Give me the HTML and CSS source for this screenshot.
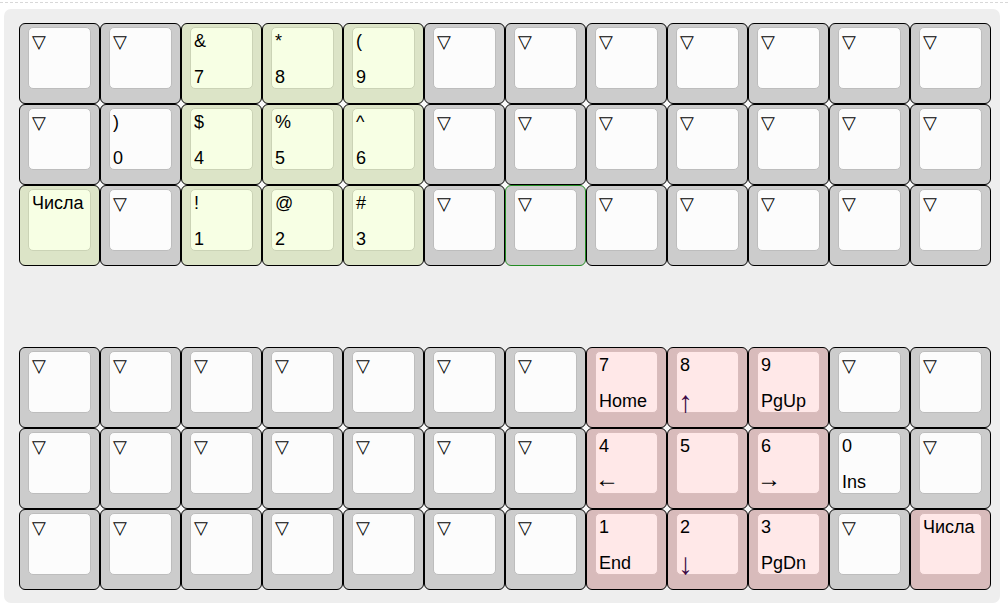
FILE: index.html
```html
<!DOCTYPE html>
<html lang="ru">
<head>
<meta charset="utf-8">
<title>Keyboard layout</title>
<link rel="stylesheet" href="styles.css">
</head>
<body>
<div class="rule"></div>
<div class="board">
  <div class="block">
    <div class="key"><div class="top"><span class="tr">▽</span></div></div>
    <div class="key"><div class="top"><span class="tr">▽</span></div></div>
    <div class="key green"><div class="top"><span>&amp;</span><span class="low">7</span></div></div>
    <div class="key green"><div class="top"><span>*</span><span class="low">8</span></div></div>
    <div class="key green"><div class="top"><span>(</span><span class="low">9</span></div></div>
    <div class="key"><div class="top"><span class="tr">▽</span></div></div>
    <div class="key"><div class="top"><span class="tr">▽</span></div></div>
    <div class="key"><div class="top"><span class="tr">▽</span></div></div>
    <div class="key"><div class="top"><span class="tr">▽</span></div></div>
    <div class="key"><div class="top"><span class="tr">▽</span></div></div>
    <div class="key"><div class="top"><span class="tr">▽</span></div></div>
    <div class="key"><div class="top"><span class="tr">▽</span></div></div>

    <div class="key"><div class="top"><span class="tr">▽</span></div></div>
    <div class="key"><div class="top"><span>)</span><span class="low">0</span></div></div>
    <div class="key green"><div class="top"><span>$</span><span class="low">4</span></div></div>
    <div class="key green"><div class="top"><span>%</span><span class="low">5</span></div></div>
    <div class="key green"><div class="top"><span>^</span><span class="low">6</span></div></div>
    <div class="key"><div class="top"><span class="tr">▽</span></div></div>
    <div class="key"><div class="top"><span class="tr">▽</span></div></div>
    <div class="key"><div class="top"><span class="tr">▽</span></div></div>
    <div class="key"><div class="top"><span class="tr">▽</span></div></div>
    <div class="key"><div class="top"><span class="tr">▽</span></div></div>
    <div class="key"><div class="top"><span class="tr">▽</span></div></div>
    <div class="key"><div class="top"><span class="tr">▽</span></div></div>

    <div class="key green"><div class="top"><span>Числа</span></div></div>
    <div class="key"><div class="top"><span class="tr">▽</span></div></div>
    <div class="key green"><div class="top"><span>!</span><span class="low">1</span></div></div>
    <div class="key green"><div class="top"><span>@</span><span class="low">2</span></div></div>
    <div class="key green"><div class="top"><span>#</span><span class="low">3</span></div></div>
    <div class="key"><div class="top"><span class="tr">▽</span></div></div>
    <div class="key selected"><div class="top"><span class="tr">▽</span></div></div>
    <div class="key"><div class="top"><span class="tr">▽</span></div></div>
    <div class="key"><div class="top"><span class="tr">▽</span></div></div>
    <div class="key"><div class="top"><span class="tr">▽</span></div></div>
    <div class="key"><div class="top"><span class="tr">▽</span></div></div>
    <div class="key"><div class="top"><span class="tr">▽</span></div></div>
  </div>

  <div class="block">
    <div class="key"><div class="top"><span class="tr">▽</span></div></div>
    <div class="key"><div class="top"><span class="tr">▽</span></div></div>
    <div class="key"><div class="top"><span class="tr">▽</span></div></div>
    <div class="key"><div class="top"><span class="tr">▽</span></div></div>
    <div class="key"><div class="top"><span class="tr">▽</span></div></div>
    <div class="key"><div class="top"><span class="tr">▽</span></div></div>
    <div class="key"><div class="top"><span class="tr">▽</span></div></div>
    <div class="key pink"><div class="top"><span>7</span><span class="low">Home</span></div></div>
    <div class="key pink"><div class="top"><span>8</span><span class="low arrow vert">↑</span></div></div>
    <div class="key pink"><div class="top"><span>9</span><span class="low">PgUp</span></div></div>
    <div class="key"><div class="top"><span class="tr">▽</span></div></div>
    <div class="key"><div class="top"><span class="tr">▽</span></div></div>

    <div class="key"><div class="top"><span class="tr">▽</span></div></div>
    <div class="key"><div class="top"><span class="tr">▽</span></div></div>
    <div class="key"><div class="top"><span class="tr">▽</span></div></div>
    <div class="key"><div class="top"><span class="tr">▽</span></div></div>
    <div class="key"><div class="top"><span class="tr">▽</span></div></div>
    <div class="key"><div class="top"><span class="tr">▽</span></div></div>
    <div class="key"><div class="top"><span class="tr">▽</span></div></div>
    <div class="key pink"><div class="top"><span>4</span><span class="low arrow horiz">←</span></div></div>
    <div class="key pink"><div class="top"><span>5</span></div></div>
    <div class="key pink"><div class="top"><span>6</span><span class="low arrow horiz">→</span></div></div>
    <div class="key"><div class="top"><span>0</span><span class="low">Ins</span></div></div>
    <div class="key"><div class="top"><span class="tr">▽</span></div></div>

    <div class="key"><div class="top"><span class="tr">▽</span></div></div>
    <div class="key"><div class="top"><span class="tr">▽</span></div></div>
    <div class="key"><div class="top"><span class="tr">▽</span></div></div>
    <div class="key"><div class="top"><span class="tr">▽</span></div></div>
    <div class="key"><div class="top"><span class="tr">▽</span></div></div>
    <div class="key"><div class="top"><span class="tr">▽</span></div></div>
    <div class="key"><div class="top"><span class="tr">▽</span></div></div>
    <div class="key pink"><div class="top"><span>1</span><span class="low">End</span></div></div>
    <div class="key pink"><div class="top"><span>2</span><span class="low arrow vert">↓</span></div></div>
    <div class="key pink"><div class="top"><span>3</span><span class="low">PgDn</span></div></div>
    <div class="key"><div class="top"><span class="tr">▽</span></div></div>
    <div class="key pink"><div class="top"><span>Числа</span></div></div>
  </div>
</div>
</body>
</html>
```

FILE: styles.css
```css
html, body {
  margin: 0;
  padding: 0;
  background: #ffffff;
}

body {
  font-family: "Liberation Sans", Arial, sans-serif;
  font-size: 18px;
  color: #000;
}

.rule {
  margin-top: 2px;
  border-top: 1px dashed #d8d8d8;
  height: 0;
}

.board {
  margin: 6px 0 0 4px;
  width: 996px;
  box-sizing: border-box;
  padding: 14px 9px 13px 15px;
  background: #eeeeee;
  border-radius: 7px;
  display: flex;
  flex-direction: column;
  gap: 81px;
}

.block {
  display: grid;
  grid-template-columns: repeat(12, 81px);
  grid-auto-rows: 81px;
  background: linear-gradient(#fafafa, #fafafa) center / calc(100% - 12px) calc(100% - 12px) no-repeat;
}

.key {
  box-sizing: border-box;
  border: 1px solid #000;
  border-radius: 6px;
  background: #cccccc;
  padding: 3px 8px 14px 8px;
}

.key .top {
  box-sizing: border-box;
  height: 100%;
  border: 1px solid #bdbdbd;
  border-radius: 5px;
  background: #fcfcfc;
  padding: 3px 3px 1px 3px;
  display: flex;
  flex-direction: column;
  align-items: flex-start;
  line-height: 20px;
  white-space: nowrap;
}

.key .low {
  margin-top: 16px;
}

.key .tr {
  font-family: "DejaVu Sans", sans-serif;
  font-size: 18px;
  margin-top: 1px;
}

.key .arrow {
  line-height: 20px;
}

.key .arrow.horiz {
  font-size: 24px;
  margin-left: -4px;
  transform: translateY(-3px);
}

.key .arrow.vert {
  font-size: 30px;
  color: #3c0a44;
  margin-left: -2px;
  transform: translateY(1px);
}

.key.green {
  background: #dce4c7;
}

.key.green .top {
  background: #f7ffe4;
  border-color: #cbd3b6;
}

.key.pink {
  background: #d8bbbb;
}

.key.pink .top {
  background: #ffe8e8;
  border-color: #d9bcbc;
}

.key.selected {
  border-color: #238b23;
}
```
